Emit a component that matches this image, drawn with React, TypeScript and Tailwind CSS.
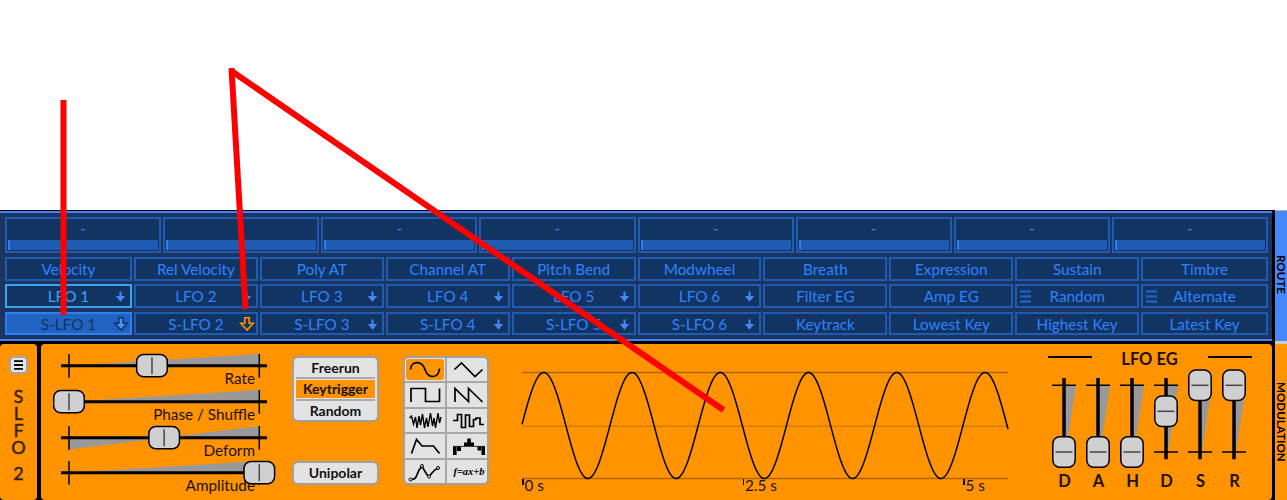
import React from "react";

type Source = { name: string; arrow?: "plain" | "outlineBlue" | "outlineOrange"; menu?: boolean; look?: "active" | "selected" };

const sources: Source[] = [
  { name: "Velocity" },
  { name: "Rel Velocity" },
  { name: "Poly AT" },
  { name: "Channel AT" },
  { name: "Pitch Bend" },
  { name: "Modwheel" },
  { name: "Breath" },
  { name: "Expression" },
  { name: "Sustain" },
  { name: "Timbre" },
  { name: "LFO 1", arrow: "plain", look: "active" },
  { name: "LFO 2", arrow: "plain" },
  { name: "LFO 3", arrow: "plain" },
  { name: "LFO 4", arrow: "plain" },
  { name: "LFO 5", arrow: "plain" },
  { name: "LFO 6", arrow: "plain" },
  { name: "Filter EG" },
  { name: "Amp EG" },
  { name: "Random", menu: true },
  { name: "Alternate", menu: true },
  { name: "S-LFO 1", arrow: "outlineBlue", look: "selected" },
  { name: "S-LFO 2", arrow: "outlineOrange" },
  { name: "S-LFO 3", arrow: "plain" },
  { name: "S-LFO 4", arrow: "plain" },
  { name: "S-LFO 5", arrow: "plain" },
  { name: "S-LFO 6", arrow: "plain" },
  { name: "Keytrack" },
  { name: "Lowest Key" },
  { name: "Highest Key" },
  { name: "Latest Key" },
];

const looks = {
  normal: "border-[#1f5bb0] bg-[#123463] text-[#2e83ff]",
  active: "border-[#3da4f0] bg-[#123463] text-[#3fa4ff]",
  selected: "border-[#2e80f0] bg-[#2163c0] text-[#123463]",
};

function Arrow({ kind }: { kind: NonNullable<Source["arrow"]> }) {
  if (kind === "plain") {
    return (
      <svg className="absolute right-[4px] top-1/2 -mt-[6px]" width="11" height="13" viewBox="0 0 11 13">
        <path d="M4.500 1.500h2v4.500h3.700L5.500 11.700L0.800 6h3.700z" fill="#4488fa" />
      </svg>
    );
  }
  const blue = kind === "outlineBlue";
  return (
    <svg className="absolute right-[1px] top-1/2 -mt-[8px]" width="16" height="16" viewBox="0 0 16 16">
      <path d="M5.800 1.700h4.400v5.600h4L8 14L1.800 7.300h4z" fill={blue ? "#4a90ff" : "#123463"} stroke={blue ? "#123463" : "#ff9300"} strokeWidth="1.600" />
    </svg>
  );
}

function SourceButton({ source }: { source: Source }) {
  return (
    <div className={`relative flex max-h-[24px] items-center justify-center border-2 pt-[2px] text-[15.3px] leading-none ${looks[source.look ?? "normal"]}`}>
      {source.menu && (
        <svg className="absolute left-[3px] top-[4px]" width="11" height="13" viewBox="0 0 11 13">
          <path d="M0 1.500h11M0 6.500h11M0 11.500h11" stroke="#1f5fc0" strokeWidth="2.400" />
        </svg>
      )}
      {source.name}
      {source.arrow && <Arrow kind={source.arrow} />}
    </div>
  );
}

function HSlider({ label, value, bipolar }: { label: string; value: number; bipolar?: boolean }) {
  const x = 16 + value * 190.3;
  return (
    <div className="relative h-[35.75px] w-[230px]">
      <div className="flex h-full justify-end pr-[28px] pt-[16px] text-[15.3px] leading-[18px] text-[#1e1100]">{label}</div>
      <svg className="absolute left-0 top-0" width="230" height="26" viewBox="0 0 230 26">
        <path d={bipolar ? "M16 12.700V24.500L206.300 1V12.700z" : "M16 12.700L206.300 1V12.700z"} fill="#999" />
        <path d="M16 1V24.700M206.300 1V24.700" stroke="#000" strokeWidth="1.500" />
        <path d="M8 12.700H214" stroke="#000" strokeWidth="3" />
        <rect x={x - 15.3} y="1.500" width="30.600" height="22.300" rx="7" fill="#d0d0d0" stroke="#000" strokeWidth="1.500" />
        <path d={`M${x} 4.200V21.200`} stroke="#444450" strokeWidth="1.500" />
      </svg>
    </div>
  );
}

function VSlider({ label, value }: { label: string; value: number }) {
  const y = 16.3 + (1 - value) * 66.7;
  return (
    <div className="flex w-[34px] flex-col items-center">
      <svg width="26" height="100" viewBox="0 0 26 100">
        <path d="M13 16.300H25L15 83H13z" fill="#999" />
        <path d="M1 16.300H25M1 83H25" stroke="#000" strokeWidth="1.500" />
        <path d="M13 9V90.300" stroke="#000" strokeWidth="3.500" />
        <rect x="1.800" y={y - 15.3} width="22.400" height="30.600" rx="7" fill="#d0d0d0" stroke="#000" strokeWidth="1.500" />
        <path d={`M4.500 ${y}H21.500`} stroke="#444450" strokeWidth="1.500" />
      </svg>
      <div className="ml-px mt-[3px] text-[16.5px] font-bold leading-[18px] text-[#1e1100]">{label}</div>
    </div>
  );
}

const shapes: React.ReactNode[] = [
  <path d="M5.500 11.500C6 2.500 17 2 20 11.500S33.500 21 34.500 10.500" />,
  <path d="M7.500 11.500L14.500 5L28 18.500L35.500 11.500" />,
  <path d="M6 19V5.500H20.500V18.500H34.500V5.500" />,
  <path d="M8 19V5.500L21.500 18.500V5.500L35.500 19" />,
  <path d="M4.500 9L6.500 7L8.500 15L10.500 8L12 19L14 7L15.500 16L17.500 5L19.500 19L21.500 9L23 18L25.500 4L27.500 17L29 9L30.500 19L33 4L34.500 14L36 8" strokeWidth="1.400" />,
  <path d="M6 11.500H10.500V5.500H14.500V18.500H18.500V6H22.500V17.500H26.500V10.500H29V9H33V15.500H37" />,
  <path d="M6.500 19.500L11.500 5.500L17 12H28.500L34.500 19.500" />,
  <>
    <path d="M6 12.400H38" strokeWidth="0.800" />
    <path d="M6 12.500h3.600v8.500H6zM10 12.500h4v4.500h-4zM17 12V8.500H20.200V4.500h3.600v4H27V12zM30.500 12.500h3.500v4h-3.500zM34.400 12.500H38V21h-3.600z" fill="#000" stroke="none" />
  </>,
  <>
    <path d="M5.500 19.500C14 20 10 12 17 6.500C20 10 20 14 24 16.500C27 14 28 10 32.500 8.500" />
    <g fill="#e3e3e3" strokeWidth="1">
      <circle cx="5.500" cy="19.500" r="1.500" />
      <circle cx="17" cy="6" r="1.500" />
      <circle cx="24" cy="16.500" r="1.500" />
      <circle cx="33" cy="8" r="1.500" />
    </g>
  </>,
];

const SINE = Array.from({ length: 487 }, (_, x) => {
  const y = 55.5 - 53 * Math.sin(((x + 0.3) / 88.25) * 2 * Math.PI);
  return `${x === 0 ? "M" : "L"}${x + 1} ${y.toFixed(2)}`;
}).join("");

const times = ["0 s", "2.5 s", "5 s"];

export default function App() {
  return (
    <div className="relative h-[500px] w-[1287px] overflow-hidden bg-white pt-[210px] font-[Lato,'Open_Sans',sans-serif]">
      <div className="flex h-[290px] bg-black">
        <div className="flex w-[1272px] flex-col">
          <div className="mt-px flex h-[130px] flex-col border-b-2 border-t-2 border-[#3f83f0] bg-[#1c3560] pl-[5px] pr-[4px] pt-[4px]">
            <div className="grid h-[36px] grid-cols-8 gap-[2px]">
              {Array.from({ length: 8 }, (_, i) => (
                <div key={i} className="flex flex-col justify-between border-2 border-[#1f5bb0] bg-[#123463] px-px pb-px text-center text-[15.3px] leading-[19px] text-[#2e83ff]">
                  -
                  <div className="h-[10px] border-l-2 border-[#2e80f0] bg-[#1f5bb0]" />
                </div>
              ))}
            </div>
            <div className="mt-[4px] grid grid-cols-[127px_repeat(8,123.9px)_1fr] grid-rows-[24px_25px_23px] gap-x-[2px] gap-y-[3px]">
              {sources.map((s) => (
                <SourceButton key={s.name} source={s} />
              ))}
            </div>
          </div>

          <div className="mt-[3px] flex h-[156px] gap-[4px]">
            <div className="flex w-[37px] flex-col items-center rounded-[4px] bg-[#ff9300] pt-[12px] text-[18px] leading-[17px] text-[#3a2400]">
              <div className="flex h-[18px] w-[19px] items-center justify-center rounded-[5px] border-2 border-[#a5a5a5] bg-[#e6e6e6]">
                <svg width="9" height="10" viewBox="0 0 9 10">
                  <path d="M0 1.200h9M0 5h9M0 8.800h9" stroke="#000" strokeWidth="1.800" />
                </svg>
              </div>
              <div className="mt-[14px] flex flex-col items-center [-webkit-text-stroke:0.5px_#3a2400]">
                <span>S</span>
                <span>L</span>
                <span>F</span>
                <span>O</span>
                <span className="mt-[9px]">2</span>
              </div>
            </div>

            <div className="flex flex-1 rounded-[4px] bg-[#ff9300]">
              <div className="ml-[12px] mt-[9px] w-[230px]">
                <HSlider label="Rate" value={0.436} />
                <HSlider label="Phase / Shuffle" value={0} />
                <HSlider label="Deform" value={0.5} bipolar />
                <HSlider label="Amplitude" value={1} />
              </div>

              <div className="ml-[9px] mt-[12px] flex w-[87px] flex-col justify-between pb-[15px] text-center text-[14px] font-bold leading-[18px] text-[#111]">
                <div className="flex h-[66px] flex-col rounded-[6px] border-2 border-[#a0a0a0] bg-[#e3e3e3] px-px">
                  <div className="h-[20px] pt-[1px]">Freerun</div>
                  <div className="mx-px h-[2px] bg-[#aaa]" />
                  <div className="mx-px mt-px h-[18px] bg-[#ff9300]">Keytrigger</div>
                  <div className="mx-px mt-px h-[2px] bg-[#aaa]" />
                  <div className="pt-[1px]">Random</div>
                </div>
                <div className="h-[24px] rounded-[6px] border-2 border-[#a0a0a0] bg-[#e3e3e3] pt-px">Unipolar</div>
              </div>

              <div className="ml-[24px] mt-[12px] grid h-[129px] w-[86px] grid-cols-2 grid-rows-5 gap-[2px] overflow-hidden rounded-[6px] border-2 border-[#a0a0a0] bg-[#a8a8a8]">
                {shapes.map((shape, i) => (
                  <div key={i} className="flex bg-[#e3e3e3]">
                    <svg
                      className={i === 0 ? "m-px h-[21px] w-[38px] rounded-[3px] bg-[#ff9300]" : "h-[24px] w-[40px]"}
                      viewBox={i === 0 ? "1 1 38 21" : "0 0 40 24"}
                      fill="none"
                      stroke="#000"
                      strokeWidth="1.700"
                    >
                      {shape}
                    </svg>
                  </div>
                ))}
                <div className="bg-[#e3e3e3] pl-[4px] pt-[4px] text-center font-['Liberation_Serif',serif] text-[10.5px] font-bold italic leading-[16px] text-black">
                  f=ax+b
                </div>
              </div>

              <div className="ml-[32px] mt-[26px] w-[488px]">
                <svg className="block" width="488" height="110" viewBox="0 0 488 110">
                  <path d="M1 2.500H487M1 108.500H487" stroke="#b06500" strokeWidth="1.700" />
                  <path d="M1 56.300H487" stroke="#d67c00" strokeWidth="1.500" />
                  <path d={SINE} fill="none" stroke="#000" strokeWidth="1.500" />
                </svg>
                <div className="-mt-[4px] grid grid-cols-[220.5px_220.5px_60px] text-[15.3px] leading-[18px] text-[#1e1100]">
                  {times.map((t) => (
                    <div key={t} className="ml-[1px] flex gap-[1px]">
                      <div className="mt-[3px] h-[6px] w-[1.5px] bg-black" />
                      {t}
                    </div>
                  ))}
                </div>
              </div>

              <div className="ml-[39px] flex w-[204px] flex-col pt-[4px]">
                <div className="flex items-start justify-between text-[16.5px] font-bold leading-[20px] text-[#1e1100]">
                  <div className="mt-[8px] h-[1.5px] w-[44px] bg-black" />
                  <div className="-ml-px pt-px">LFO EG</div>
                  <div className="mt-[8px] h-[1.5px] w-[44px] bg-black" />
                </div>
                <div className="-ml-px flex">
                  <VSlider label="D" value={0} />
                  <VSlider label="A" value={0} />
                  <VSlider label="H" value={0} />
                  <VSlider label="D" value={0.61} />
                  <VSlider label="S" value={1} />
                  <VSlider label="R" value={1} />
                </div>
              </div>
            </div>
          </div>
        </div>

        <div className="ml-[3px] flex w-[12px] flex-col text-[11.6px] font-bold leading-[12px] text-black">
          <div className="flex h-[131px] items-center justify-center border-t border-[#aab4c8] bg-[#4488fa] pb-[4px] [writing-mode:vertical-rl]">ROUTE</div>
          <div className="flex h-[159px] items-center justify-center border-t-[3px] border-[#ccc] bg-[#ff9300] pb-px [writing-mode:vertical-rl]">MODULATION</div>
        </div>
      </div>

      <svg className="pointer-events-none absolute left-0 top-0" width="1287" height="500" viewBox="0 0 1287 500" fill="none" stroke="#f00" strokeWidth="6">
        <path d="M63.500 100V315" />
        <path d="M231.500 68L245.500 309" />
        <path d="M231.500 71L723.500 410" />
      </svg>
    </div>
  );
}
